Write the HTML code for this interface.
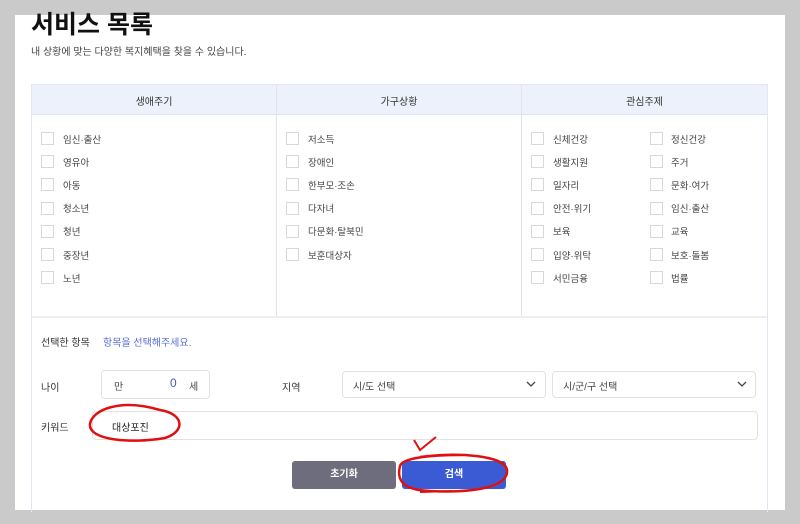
<!DOCTYPE html>
<html><head><meta charset="utf-8"><style>
*{box-sizing:border-box;margin:0;padding:0}
body{width:800px;height:524px;background:#cacaca;position:relative;overflow:hidden;font-family:"Liberation Sans","Noto Sans CJK KR",sans-serif;color:#333}
.panel{position:absolute;left:15px;top:15px;width:770px;height:495px;background:#fff}
.a{position:absolute;white-space:nowrap}
.cb{position:absolute;width:13px;height:13px;border:1px solid #d8d8d8;background:#fff}
.lb{position:absolute;font-size:9.5px;color:#444}
.box{position:absolute;border:1px solid #e2e2e2;border-radius:4px;background:#fff}
</style></head><body>
<div class="panel"></div>
<div class="a" style="left:31px;top:5px;font-size:25px;font-weight:bold;color:#111">서비스 목록</div>
<div class="a" style="left:31px;top:43px;font-size:10px;color:#444">내 상황에 맞는 다양한 복지혜택을 찾을 수 있습니다.</div>
<div class="a" style="left:31px;top:84px;width:737px;height:428px;border:1px solid #e3e6ee;border-bottom:none"></div>
<div class="a" style="left:32px;top:85px;width:735px;height:30px;background:#edf1fb;border-bottom:1px solid #dfe4f0"></div>
<div class="a" style="left:276px;top:85px;width:1px;height:231px;background:#e0e3ea"></div>
<div class="a" style="left:521px;top:85px;width:1px;height:231px;background:#e0e3ea"></div>
<div class="a" style="left:32px;top:316px;width:735px;height:2px;background:#eceef2"></div>
<div class="a" style="left:32px;top:93px;width:244px;text-align:center;font-size:10px;color:#333">생애주기</div>
<div class="a" style="left:277px;top:93px;width:244px;text-align:center;font-size:10px;color:#333">가구상황</div>
<div class="a" style="left:522px;top:93px;width:245px;text-align:center;font-size:10px;color:#333">관심주제</div>
<div id="items"></div>
<script>
var cols=[[41,63,["임신·출산","영유아","아동","청소년","청년","중장년","노년"]],[286,308,["저소득","장애인","한부모·조손","다자녀","다문화·탈북민","보훈대상자"]],[531,553,["신체건강","생활지원","일자리","안전·위기","보육","입양·위탁","서민금융"]],[650,671,["정신건강","주거","문화·여가","임신·출산","교육","보호·돌봄","법률"]]];
var h="";cols.forEach(function(c){c[2].forEach(function(t,i){var y=132+i*23.2;h+='<div class="cb" style="left:'+c[0]+'px;top:'+y+'px"></div><div class="lb" style="left:'+c[1]+'px;top:'+(y-0.5)+'px">'+t+'</div>';});});
document.getElementById('items').innerHTML=h;
</script>
<div class="a" style="left:41px;top:334px;font-size:10px;color:#333">선택한 항목</div>
<div class="a" style="left:103px;top:334px;font-size:10px;color:#5a6fd0">항목을 선택해주세요.</div>
<div class="a" style="left:41px;top:379px;font-size:10px;color:#333">나이</div>
<div class="box" style="left:101px;top:370px;width:109px;height:29px"></div>
<div class="a" style="left:114px;top:378px;font-size:10px;color:#444">만</div>
<div class="a" style="left:170px;top:376px;font-size:12px;color:#3c5bd0">0</div>
<div class="a" style="left:189px;top:378px;font-size:10px;color:#444">세</div>
<div class="a" style="left:282px;top:379px;font-size:10px;color:#333">지역</div>
<div class="box" style="left:342px;top:371px;width:204px;height:27px"></div>
<div class="a" style="left:353px;top:378px;font-size:10px;color:#444">시/도 선택</div>
<div class="box" style="left:552px;top:371px;width:204px;height:27px"></div>
<div class="a" style="left:563px;top:378px;font-size:10px;color:#444">시/군/구 선택</div>
<svg class="a" style="left:526px;top:380px" width="10" height="8"><path d="M1 2 L5 6 L9 2" stroke="#444" stroke-width="1.3" fill="none"/></svg>
<svg class="a" style="left:737px;top:380px" width="10" height="8"><path d="M1 2 L5 6 L9 2" stroke="#444" stroke-width="1.3" fill="none"/></svg>
<div class="a" style="left:41px;top:419px;font-size:10px;color:#333">키워드</div>
<div class="box" style="left:92px;top:411px;width:666px;height:29px"></div>
<div class="a" style="left:112px;top:419px;font-size:10px;color:#222">대상포진</div>
<div class="a" style="left:292px;top:461px;width:104px;height:28px;background:#6d6d7d;border-radius:3px;color:#fff;font-size:10px;font-weight:bold;text-align:center;line-height:28px">초기화</div>
<div class="a" style="left:402px;top:461px;width:104px;height:28px;background:#3b5bd5;border-radius:3px;color:#fff;font-size:10px;font-weight:bold;text-align:center;line-height:28px">검색</div>
<svg class="a" style="left:0;top:0" width="800" height="524">
<path d="M160 410 C120 398 92 410 90 424 C88 440 130 444 165 438 C185 432 185 414 160 410" stroke="#e01010" stroke-width="2.5" fill="none"/>
<path d="M420 457 C455 452 505 455 507 470 C509 488 470 493 430 491 C400 490 397 478 400 466 C402 458 430 455 460 455" stroke="#e01010" stroke-width="2.5" fill="none"/>
<path d="M420 492 L452 491" stroke="#e01010" stroke-width="2" fill="none"/>
<path d="M414 440 L420 450 L436 437" stroke="#e01010" stroke-width="2" fill="none"/>
</svg>
</body></html>
